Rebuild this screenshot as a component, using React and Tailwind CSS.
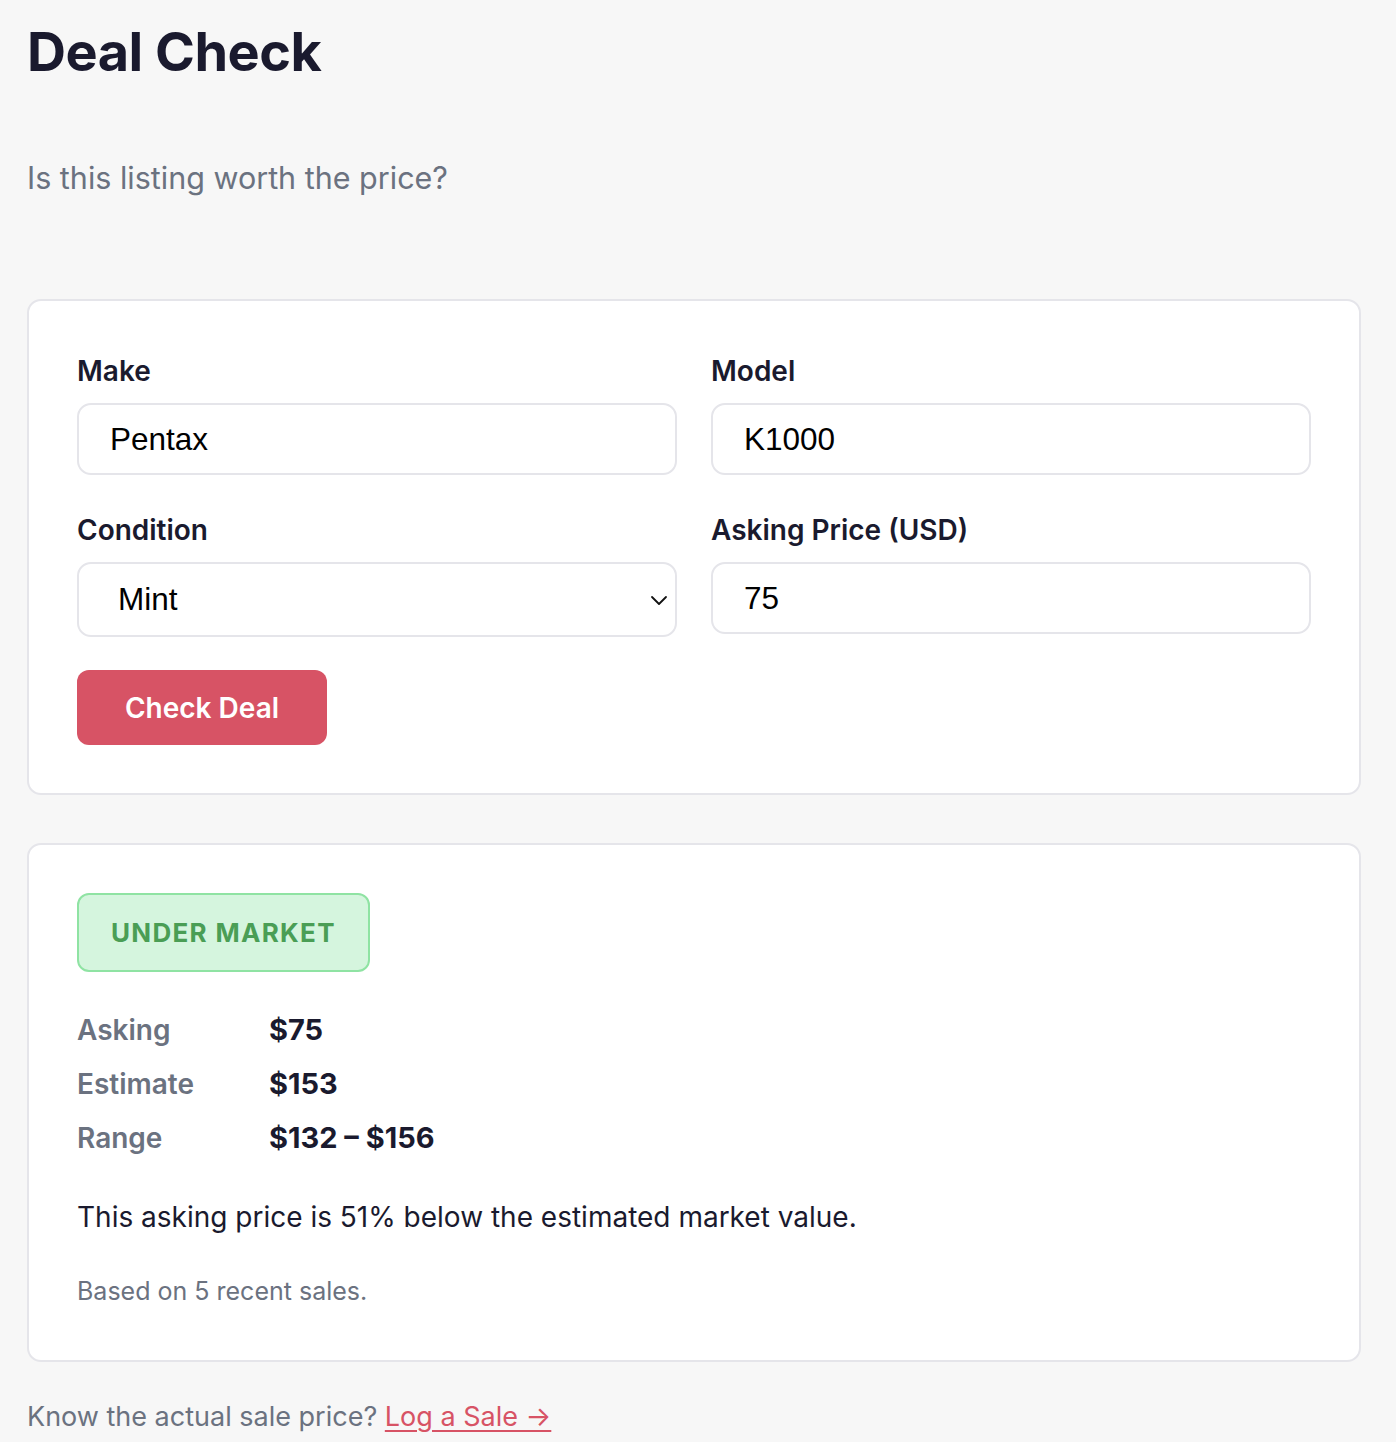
import React from "react";

const rows = [
  ["Asking", "$75"],
  ["Estimate", "$153"],
  ["Range", "$132 – $156"],
];

function Field({ label, children }) {
  return (
    <div className="flex flex-col">
      <label className="text-[28px] leading-[40px] font-semibold text-[#1a1a2e]">{label}</label>
      <div className="mt-3">{children}</div>
    </div>
  );
}

function TextInput({ value }) {
  return (
    <input
      readOnly
      value={value}
      className="w-full h-[72px] rounded-[14px] border-2 border-[#e5e5ea] bg-white px-[31px] text-[31.5px] text-black outline-none font-['Liberation_Sans',Arial,sans-serif]"
    />
  );
}

export default function App() {
  return (
    <div className="min-h-[1442px] bg-[#f7f7f7] pl-[27px] pr-[35px] pt-[14px] font-['Inter',sans-serif] text-[#1a1a2e]">
      <h1 className="text-[54px] leading-[76px] font-bold tracking-[-0.5px]">Deal Check</h1>
      <p className="mt-[67px] text-[30.5px] leading-[42px] text-[#6b7280]">Is this listing worth the price?</p>

      {/* Form card */}
      <div className="mt-[100px] rounded-[14px] border-2 border-[#e5e5ea] bg-white px-[48px] pt-[50px] pb-[48px]">
        <div className="grid grid-cols-2 gap-x-[34px] gap-y-[35px]">
          <Field label="Make"><TextInput value="Pentax" /></Field>
          <Field label="Model"><TextInput value="K1000" /></Field>
          <Field label="Condition">
            <div className="relative">
              <select
                defaultValue="Mint"
                className="w-full h-[75px] appearance-none rounded-[14px] border-2 border-[#e5e5ea] bg-white pl-[39px] pr-12 text-[31.5px] text-black outline-none font-['Liberation_Sans',Arial,sans-serif]"
              >
                <option>Mint</option>
                <option>Excellent</option>
                <option>Good</option>
                <option>Fair</option>
              </select>
              <svg
                className="pointer-events-none absolute right-[9px] top-1/2 -translate-y-1/2"
                width="18" height="12" viewBox="0 0 18 12" fill="none"
              >
                <path d="M2 3l7 7 7-7" stroke="#111" strokeWidth="1.8" strokeLinecap="round" strokeLinejoin="round" />
              </svg>
            </div>
          </Field>
          <Field label="Asking Price (USD)"><TextInput value="75" /></Field>
        </div>
        <button className="mt-[33px] h-[75px] w-[250px] rounded-[12px] bg-[#d75365] text-[28px] font-semibold text-white">
          Check Deal
        </button>
      </div>

      {/* Result card */}
      <div className="mt-[48px] rounded-[14px] border-2 border-[#e5e5ea] bg-white px-[48px] pt-[48px] pb-[52px]">
        <div className="inline-flex h-[79px] items-center rounded-[12px] border-2 border-[#8fe3a3] bg-[#d5f5de] px-[32px] text-[26px] font-bold tracking-[0.05em] text-[#4a9e55]">
          UNDER MARKET
        </div>
        <div className="mt-[38px] flex flex-col gap-[14px]">
          {rows.map(([k, v]) => (
            <div key={k} className="flex text-[28px] leading-[40px]">
              <span className="w-[192px] font-semibold text-[#6b7280]">{k}</span>
              <span className="font-bold text-[29px] text-[#1a1a2e]">{v}</span>
            </div>
          ))}
        </div>
        <p className="mt-[39px] text-[28px] leading-[40px] text-[#1a1a2e]">
          This asking price is 51% below the estimated market value.
        </p>
        <p className="mt-[37px] text-[25px] leading-[34px] text-[#6b7280]">Based on 5 recent sales.</p>
      </div>

      <p className="mt-[35px] text-[27px] leading-[40px] text-[#6b7280]">
        Know the actual sale price?{" "}
        <a href="#" className="text-[#d75365] underline underline-offset-4">Log a Sale →</a>
      </p>
    </div>
  );
}
